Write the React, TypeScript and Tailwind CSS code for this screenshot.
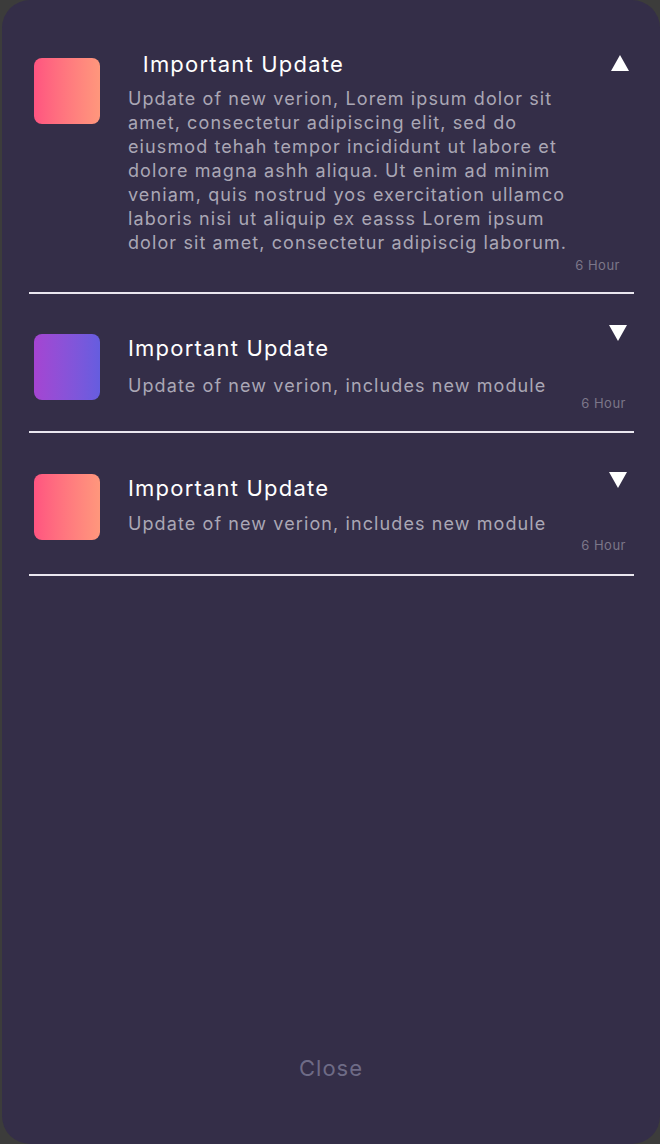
import React from "react";

interface Note {
  title: string;
  body: string;
  time: string;
  open: boolean;
  gradient: string;
}

const notes: Note[] = [
  {
    title: "\u00a0\u00a0Important Update",
    body:
      "Update of new verion, Lorem ipsum dolor sit amet, consectetur adipiscing elit, sed do eiusmod tehah tempor incididunt ut labore et dolore magna ashh aliqua. Ut enim ad minim veniam, quis nostrud yos exercitation ullamco laboris nisi ut aliquip ex easss Lorem ipsum dolor sit amet, consectetur adipiscig laborum.",
    time: "6 Hour",
    open: true,
    gradient: "bg-gradient-to-r from-[#ff5480] to-[#ff977c]",
  },
  {
    title: "Important Update",
    body: "Update of new verion, includes new module",
    time: "6 Hour",
    open: false,
    gradient: "bg-gradient-to-r from-[#a544d2] to-[#655ddf]",
  },
  {
    title: "Important Update",
    body: "Update of new verion, includes new module",
    time: "6 Hour",
    open: false,
    gradient: "bg-gradient-to-r from-[#ff5480] to-[#ff977c]",
  },
];

function Arrow({ up }: { up: boolean }) {
  return (
    <svg width="18" height="16" viewBox="0 0 18 16" className="block">
      {up ? <polygon points="9,0 18,16 0,16" fill="#fff" /> : <polygon points="0,0 18,0 9,16" fill="#fff" />}
    </svg>
  );
}

function Divider() {
  return <div className="ml-[27px] w-[605px] h-[2px] bg-[#e9e7ef]" />;
}

export default function App() {
  return (
    <div className="w-[660px] h-[1144px] bg-[#3c3c3b] flex" style={{ fontFamily: "Inter, 'Noto Sans', sans-serif" }}>
      <div className="ml-[2px] flex-1 h-full rounded-[28px] bg-[#342e48] flex flex-col">
        {/* Expanded item */}
        <div className="flex items-start pt-[50px]">
          <div className={`ml-[32px] mt-[8px] w-[66px] h-[66px] rounded-[8px] ${notes[0].gradient}`} />
          <div className="ml-[28px] w-[460px]">
            <p className="text-[22px] leading-[28px] font-normal tracking-[1.2px] text-white">{notes[0].title}</p>
            <p className="mt-[9px] text-[18px] leading-[24px] tracking-[1.1px] text-[#aaa7b5]">{notes[0].body}</p>
          </div>
          <div className="ml-[23px] mt-[5px]">
            <Arrow up />
          </div>
        </div>
        <p className="mt-[2px] pr-[40px] text-right text-[13px] leading-[16px] tracking-[0.5px] text-[#7c7789]">{notes[0].time}</p>
        <div className="mt-[19px]">
          <Divider />
        </div>

        {notes.slice(1).map((n, i) => (
          <div key={i}>
            <div className={`flex items-start ${i === 0 ? "pt-[31px]" : "pt-[32px]"}`}>
              <div className={`ml-[32px] mt-[9px] w-[66px] h-[66px] rounded-[8px] ${n.gradient}`} />
              <div className="ml-[28px] w-[460px] mt-[9px]">
                <p className="text-[22px] leading-[28px] font-normal tracking-[1.2px] text-white">{n.title}</p>
                <p className={`${i === 0 ? "mt-[12px]" : "mt-[10px]"} text-[18px] leading-[24px] tracking-[1.1px] text-[#aaa7b5]`}>{n.body}</p>
              </div>
              <div className={`ml-[21px] ${i === 0 ? "mt-0" : "mt-[7px]"}`}>
                <Arrow up={false} />
              </div>
            </div>
            <p className={`${i === 0 ? "-mt-[5px]" : "-mt-[3px]"} pr-[34px] text-right text-[13px] leading-[16px] tracking-[0.5px] text-[#7c7789]`}>{n.time}</p>
            <div className={i === 0 ? "mt-[20px]" : "mt-[21px]"}>
              <Divider />
            </div>
          </div>
        ))}

        <div className="flex-1" />
        <p className="pb-[62px] text-center text-[22px] leading-[28px] tracking-[1px] text-[#6e6b86]">Close</p>
      </div>
    </div>
  );
}
